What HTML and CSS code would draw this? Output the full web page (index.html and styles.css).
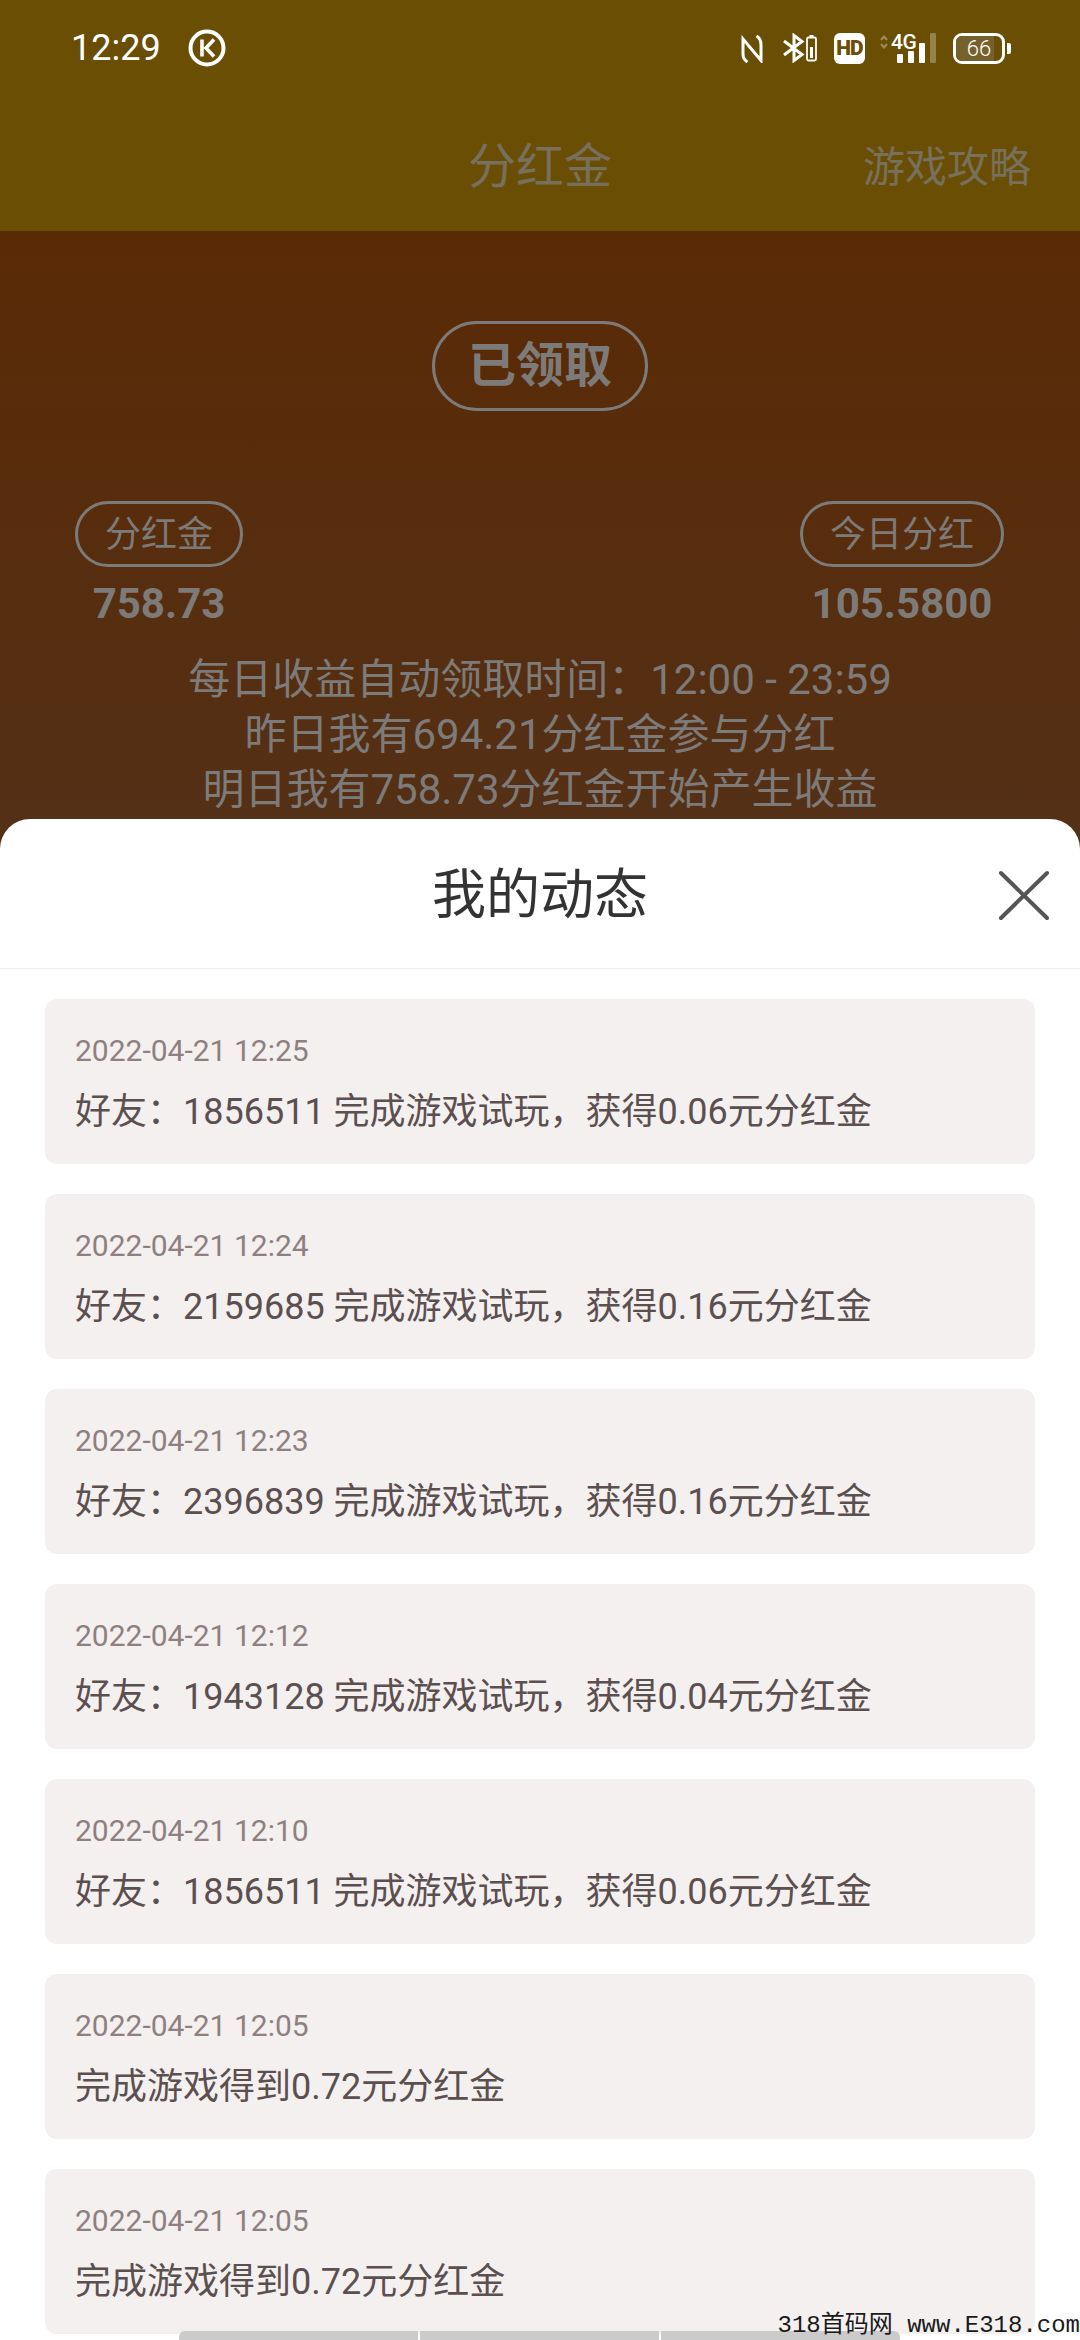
FILE: index.html
```html
<!DOCTYPE html>
<html lang="zh-CN">
<head>
  <meta charset="UTF-8" />
  <meta name="viewport" content="width=device-width, initial-scale=1.0"/>
  <title>分红金</title>
  <link rel="stylesheet" href="styles.css">
</head>
<body>
  <header class="top">
    <div class="status-bar">
      <div class="status-left">
        <span class="clock">12:29</span>
        <svg class="icon-k" width="38" height="38" viewBox="0 0 38 38">
          <circle cx="19" cy="19" r="16.500" fill="none" stroke="#fff" stroke-width="4"/>
          <path d="M14 10.500v17M26 10.500l-8 8.500 8 8.500" fill="none" stroke="#fff" stroke-width="3.600"/>
        </svg>
      </div>
      <div class="status-right">
        <svg class="icon-nfc" width="22" height="28" viewBox="0 0 22 28">
          <path d="M6.500 27C3 25 2 22 2 19V4L20 25.500V10C20 6 19 3 15.500 1" fill="none" stroke="#fff" stroke-width="3"/>
        </svg>
        <svg class="icon-bt" width="36" height="30" viewBox="0 0 36 30">
          <path d="M2 8l18 13.500-8 6V2.500l8 6L2 22" fill="none" stroke="#fff" stroke-width="3"/>
          <rect x="25" y="4.500" width="9" height="23" rx="1.500" fill="none" stroke="#fff" stroke-width="1.800"/>
          <rect x="27.500" y="2" width="4" height="2.500" fill="#fff"/>
          <rect x="28" y="14" width="3" height="11" fill="#fff"/>
        </svg>
        <span class="hd">HD</span>
        <div class="signal">
          <svg class="arrows" width="8" height="14" viewBox="0 0 8 14">
            <path d="M1 5l3-3.500L7 5M1 9l3 3.500L7 9" fill="none" stroke="#a08c55" stroke-width="2"/>
          </svg>
          <span class="net">4G</span>
          <span class="bar bar-1"></span>
          <span class="bar bar-2"></span>
          <span class="bar bar-3"></span>
          <span class="bar bar-4"></span>
        </div>
        <div class="battery">
          <div class="battery-body"><span class="battery-level"></span><span class="battery-num">66</span></div>
          <span class="battery-tip"></span>
        </div>
      </div>
    </div>
    <nav class="nav">
      <h1>分红金</h1>
      <a class="guide">游戏攻略</a>
    </nav>
  </header>

  <main class="main">
    <div class="claimed">已领取</div>
    <div class="stats">
      <div class="stat">
        <span class="tag">分红金</span>
        <b>758.73</b>
      </div>
      <div class="stat">
        <span class="tag">今日分红</span>
        <b>105.5800</b>
      </div>
    </div>
    <div class="notes">
      <p>每日收益自动领取时间：12:00 - 23:59</p>
      <p>昨日我有694.21分红金参与分红</p>
      <p>明日我有758.73分红金开始产生收益</p>
    </div>
  </main>

  <section class="sheet">
    <div class="sheet-head">
      <h2>我的动态</h2>
      <svg class="close" width="52" height="52" viewBox="0 0 52 52">
        <path d="M3 4l46 45M49 4L3 49" fill="none" stroke="#555" stroke-width="4" stroke-linecap="round"/>
      </svg>
    </div>
    <ul class="list">
      <li class="item"><time>2022-04-21 12:25</time><p>好友：1856511 完成游戏试玩，获得0.06元分红金</p></li>
      <li class="item"><time>2022-04-21 12:24</time><p>好友：2159685 完成游戏试玩，获得0.16元分红金</p></li>
      <li class="item"><time>2022-04-21 12:23</time><p>好友：2396839 完成游戏试玩，获得0.16元分红金</p></li>
      <li class="item"><time>2022-04-21 12:12</time><p>好友：1943128 完成游戏试玩，获得0.04元分红金</p></li>
      <li class="item"><time>2022-04-21 12:10</time><p>好友：1856511 完成游戏试玩，获得0.06元分红金</p></li>
      <li class="item"><time>2022-04-21 12:05</time><p>完成游戏得到0.72元分红金</p></li>
      <li class="item"><time>2022-04-21 12:05</time><p>完成游戏得到0.72元分红金</p></li>
    </ul>
  </section>

  <div class="tabs"><span></span><span></span><span></span></div>
  <div class="watermark">318首码网 www.E318.com</div>
</body>
</html>
```

FILE: styles.css
```css
* {
  box-sizing: border-box;
}
html, body {
  margin: 0;
  height: 2340px;
  overflow: hidden;
}
body {
  position: relative;
  font-family: Roboto, "Noto Sans CJK SC", sans-serif;
  background: #5a2a06;
}
h1, h2, p, ul {
  margin: 0;
  padding: 0;
}
.top {
  height: 231px;
  background-color: #6a4e04;
}
.status-bar {
  height: 96px;
  padding: 32px 69px 0 71px;
  display: flex;
  justify-content: space-between;
  align-items: flex-start;
}
.status-left {
  display: flex;
  align-items: flex-start;
  gap: 27px;
  margin-top: -3px;
}
.clock {
  font-size: 36px;
  line-height: 38px;
  color: #fff;
}
.status-right {
  display: flex;
  align-items: flex-start;
}
.icon-nfc {
  margin: 3px 19px 0 0;
}
.icon-bt {
  margin: 1px 16px 0 0;
}
.hd {
  width: 31px;
  height: 31px;
  margin-top: 1px;
  border-radius: 6px;
  background: #fff;
  color: #6a4e04;
  font-size: 21px;
  font-weight: 900;
  line-height: 31px;
  text-align: center;
  letter-spacing: -1px;
}
.signal {
  position: relative;
  width: 71px;
  height: 31px;
  margin: 1px 2px 0 15px;
}
.arrows {
  position: absolute;
  left: 0;
  top: 2px;
}
.net {
  position: absolute;
  left: 11px;
  top: -1px;
  font-size: 21px;
  font-weight: 500;
  line-height: 20px;
  color: #fff;
  letter-spacing: -0.5px;
}
.bar {
  position: absolute;
  bottom: 1px;
  width: 6px;
  border-radius: 1px;
  background: #fff;
}
.bar-1 { left: 17px; height: 9px; }
.bar-2 { left: 28px; height: 12px; }
.bar-3 { left: 39px; height: 20px; }
.bar-4 { left: 50px; height: 30px; background: #97824a; }
.battery {
  display: flex;
  align-items: center;
  height: 31px;
  margin-top: 1px;
}
.battery-body {
  position: relative;
  width: 52px;
  height: 31px;
  border: 3px solid #fff;
  border-radius: 9px;
  overflow: hidden;
}
.battery-level {
  position: absolute;
  left: 0;
  top: 0;
  bottom: 0;
  width: 82%;
  background: #76602c;
}
.battery-num {
  position: relative;
  display: block;
  font-size: 22px;
  font-weight: 300;
  line-height: 25px;
  text-align: center;
  color: #fff;
}
.battery-tip {
  width: 4px;
  height: 11px;
  margin-left: 2px;
  border-radius: 0 2px 2px 0;
  background: #fff;
}
.nav {
  height: 135px;
  position: relative;
  display: flex;
  justify-content: center;
  align-items: center;
  color: #77705c;
}
.nav h1 {
  font-size: 48px;
  font-weight: 400;
  line-height: 60px;
  margin-top: 7px;
}
.guide {
  position: absolute;
  right: 49px;
  top: 42px;
  font-size: 42px;
  line-height: 60px;
}
.main {
  height: 1000px;
  padding-top: 90px;
  background: linear-gradient(#5a2a05, #543016 588px);
  color: #7d7b79;
  display: flex;
  flex-direction: column;
  align-items: center;
}
.claimed {
  width: 216px;
  height: 90px;
  border: 3px solid #7d7b79;
  border-radius: 45px;
  font-size: 48px;
  font-weight: 700;
  line-height: 84px;
  text-align: center;
}
.stats {
  width: 100%;
  margin-top: 90px;
  padding: 0 76px 0 75px;
  display: flex;
  justify-content: space-between;
}
.stat {
  display: flex;
  flex-direction: column;
  align-items: center;
}
.tag {
  height: 66px;
  padding: 0 27px;
  border: 3px solid #7d7b79;
  border-radius: 33px;
  font-size: 36px;
  line-height: 62px;
}
.stat b {
  margin-top: 9px;
  font-size: 42px;
  line-height: 56px;
}
.notes {
  margin-top: 20px;
  text-align: center;
  font-size: 42px;
  line-height: 55px;
}
.sheet {
  position: absolute;
  left: 0;
  right: 0;
  top: 819px;
  bottom: 0;
  background: #fff;
  border-radius: 30px 30px 0 0;
  overflow: hidden;
}
.sheet-head {
  position: relative;
  height: 150px;
  padding-top: 5px;
  border-bottom: 1px solid #eeeeee;
  display: flex;
  justify-content: center;
  align-items: center;
}
.sheet-head h2 {
  font-size: 54px;
  font-weight: 400;
  line-height: 76px;
  color: #333;
}
.close {
  position: absolute;
  right: 30px;
  top: 50px;
}
.list {
  list-style: none;
  padding: 30px 45px 0;
  display: flex;
  flex-direction: column;
  gap: 30px;
}
.item {
  height: 165px;
  padding: 30px 30px 0;
  background: #f4f0f0;
  border-radius: 12px;
}
.item time {
  display: block;
  font-size: 30px;
  line-height: 44px;
  color: #8f8080;
}
.item p {
  margin-top: 14px;
  font-size: 36px;
  line-height: 50px;
  color: #5c4f4f;
}
.tabs {
  position: absolute;
  left: 179px;
  bottom: 0;
  width: 721px;
  height: 9px;
  display: flex;
  gap: 2px;
  border-radius: 6px 6px 0 0;
  overflow: hidden;
}
.tabs span {
  flex: 1;
  background: #cbcbcb;
}
.watermark {
  position: absolute;
  right: 0;
  bottom: 0;
  font-family: "Liberation Mono", "Noto Sans CJK SC", monospace;
  font-size: 24px;
  line-height: 28px;
  color: #1a1a1a;
  white-space: nowrap;
}
```
